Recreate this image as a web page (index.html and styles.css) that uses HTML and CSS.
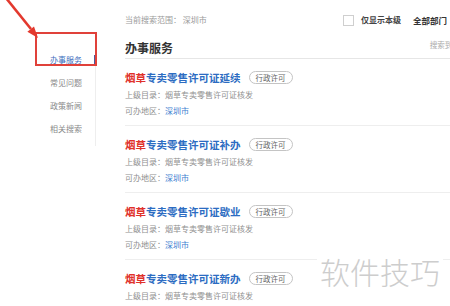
FILE: index.html
```html
<!DOCTYPE html>
<html>
<head>
  <meta charset="utf-8">
  <title>办事服务 - 搜索结果</title>
  <link rel="stylesheet" href="styles.css">
</head>
<body>
  <div class="page">
    <aside class="sidebar">
      <ul class="nav">
        <li class="nav-item active">办事服务</li>
        <li class="nav-item">常见问题</li>
        <li class="nav-item">政策新闻</li>
        <li class="nav-item">相关搜索</li>
      </ul>
    </aside>

    <main class="main">
      <div class="scope-bar">
        <span class="scope">当前搜索范围： 深圳市</span>
        <div class="filters">
          <span class="checkbox"></span>
          <span class="filter-label">仅显示本级</span>
          <span class="filter-dept">全部部门</span>
        </div>
      </div>

      <div class="section-head">
        <h2>办事服务</h2>
        <span class="count">搜索到4条结果</span>
      </div>

      <ul class="results">
        <li class="result">
          <div class="result-title"><a><em>烟草</em>专卖零售许可证延续</a><span class="tag">行政许可</span></div>
          <p class="meta">上级目录：烟草专卖零售许可证核发</p>
          <p class="meta">可办地区：<a>深圳市</a></p>
        </li>
        <li class="result">
          <div class="result-title"><a><em>烟草</em>专卖零售许可证补办</a><span class="tag">行政许可</span></div>
          <p class="meta">上级目录：烟草专卖零售许可证核发</p>
          <p class="meta">可办地区：<a>深圳市</a></p>
        </li>
        <li class="result">
          <div class="result-title"><a><em>烟草</em>专卖零售许可证歇业</a><span class="tag">行政许可</span></div>
          <p class="meta">上级目录：烟草专卖零售许可证核发</p>
          <p class="meta">可办地区：<a>深圳市</a></p>
        </li>
        <li class="result">
          <div class="result-title"><a><em>烟草</em>专卖零售许可证新办</a><span class="tag">行政许可</span></div>
          <p class="meta">上级目录：烟草专卖零售许可证核发</p>
          <p class="meta">可办地区：<a>深圳市</a></p>
        </li>
      </ul>
    </main>

    <!-- annotation drawn over the screenshot -->
    <div class="highlight-box"></div>
    <svg class="arrow" width="50" height="45" viewBox="0 0 50 45">
      <line x1="6" y1="-2" x2="31" y2="29" stroke="#e3392e" stroke-width="2.6"/>
      <polygon points="38,38 27.4,31.8 34,26.4" fill="#e3392e"/>
    </svg>

    <div class="watermark">软件技巧</div>
  </div>
</body>
</html>
```

FILE: styles.css
```css
html, body {
  margin: 0;
  overflow: hidden;
  background: #fff;
}

body {
  font-family: "Noto Sans CJK SC", "Noto Sans", sans-serif;
  color: #333;
}

ul {
  list-style: none;
  margin: 0;
  padding: 0;
}

a {
  text-decoration: none;
}

.page {
  position: relative;
  display: flex;
  width: 450px;
  height: 306px;
  overflow: hidden;
}

/* left navigation */
.sidebar {
  width: 96px;
  flex-shrink: 0;
}

.nav {
  margin-top: 46px;
  padding: 2px 0 6px 50px;
  border-right: 1px solid #eee;
}

.nav-item {
  position: relative;
  font-size: 8px;
  line-height: 23px;
  color: #8a8a8a;
}

.nav-item.active {
  color: #3d6dbd;
}

.nav-item.active::after {
  content: "";
  position: absolute;
  right: -2px;
  top: 7px;
  width: 3px;
  height: 10px;
  background: #4b5a9c;
}

/* main column */
.main {
  width: 354px;
  margin-left: 29px;
  flex-shrink: 0;
}

.scope-bar {
  display: flex;
  justify-content: space-between;
  align-items: center;
  padding: 14px 32px 0 0;
  line-height: 12px;
  font-size: 8px;
}

.scope {
  color: #9a9a9a;
}

.filters {
  display: flex;
  align-items: center;
}

.checkbox {
  width: 9px;
  height: 9px;
  border: 1px solid #cfcfcf;
  margin-right: 7px;
}

.filter-label {
  color: #444;
  font-weight: bold;
  margin-right: 12px;
}

.filter-dept {
  color: #333;
  font-weight: bold;
  font-size: 8.5px;
}

.section-head {
  display: flex;
  justify-content: space-between;
  align-items: flex-start;
  padding: 14px 0 2px;
  border-bottom: 1px solid #e6e6e6;
}

.section-head h2 {
  margin: 0;
  font-size: 12px;
  line-height: 16px;
  color: #333;
}

.count {
  margin-top: -1px;
  font-size: 7.5px;
  line-height: 12px;
  color: #aaa;
  white-space: nowrap;
}

/* results */
.result {
  padding: 10px 0 6px;
  border-bottom: 1px solid #eee;
}

.result-title {
  display: flex;
  align-items: center;
  height: 16px;
}

.result-title a {
  font-size: 10.5px;
  font-weight: bold;
  color: #2c6cc2;
  white-space: nowrap;
}

.result-title em {
  font-style: normal;
  color: #e0302a;
}

.tag {
  display: inline-flex;
  align-items: center;
  height: 11px;
  margin-left: 8px;
  padding: 0 6px;
  border: 1px solid #c4c4c4;
  border-radius: 7px;
  font-size: 7.5px;
  color: #666;
  white-space: nowrap;
}

.meta {
  margin: 0;
  font-size: 8px;
  line-height: 16px;
  color: #8f8f8f;
}

.result-title + .meta {
  margin-top: 2px;
}

.meta a {
  color: #3d80d0;
}

/* overlays */
.highlight-box {
  position: absolute;
  left: 35px;
  top: 32px;
  width: 62px;
  height: 34px;
  box-sizing: border-box;
  border: 2px solid #e0413a;
}

.arrow {
  position: absolute;
  left: 0;
  top: 0;
}

.watermark {
  position: absolute;
  left: 317px;
  top: 253px;
  padding: 0 3px;
  background: #fff;
  font-size: 30px;
  line-height: 36px;
  font-weight: 300;
  color: #cdcdcd;
}
```
